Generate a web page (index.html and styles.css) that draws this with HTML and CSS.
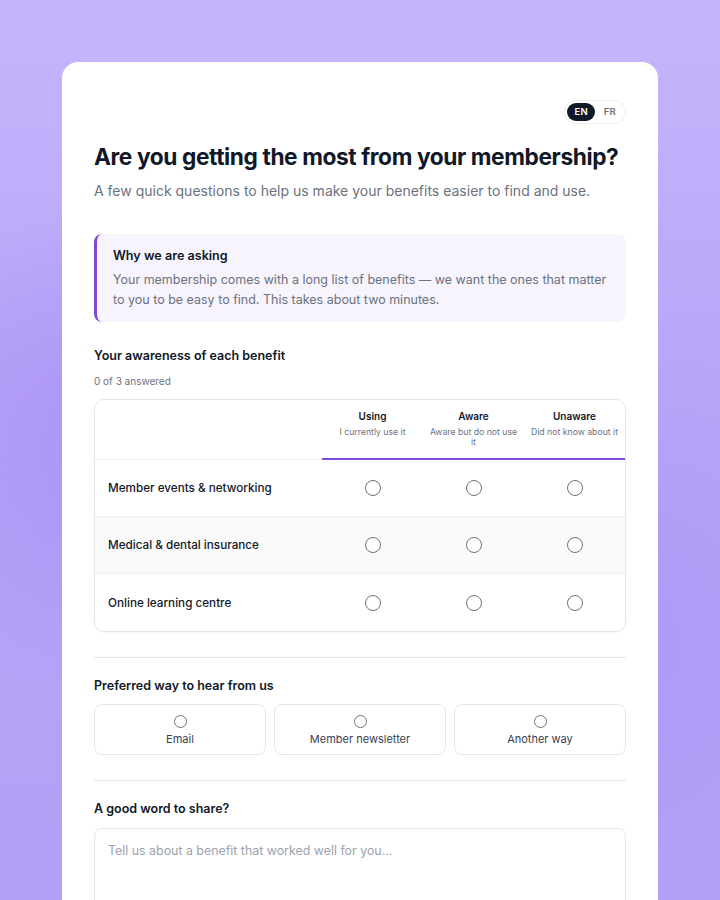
FILE: index.html
```html
<!DOCTYPE html>
<html lang="en">
<head>
<meta charset="utf-8">
<title>Membership survey</title>
<link rel="stylesheet" href="styles.css">
</head>
<body>
<div class="page">
  <main class="card">
    <div class="lang-row">
      <div class="lang">
        <span class="lang-opt active">EN</span>
        <span class="lang-opt">FR</span>
      </div>
    </div>
    <h1 class="title">Are you getting the most from your membership?</h1>
    <p class="subtitle">A few quick questions to help us make your benefits easier to find and use.</p>

    <div class="info">
      <div class="info-title">Why we are asking</div>
      <p class="info-text">Your membership comes with a long list of benefits — we want the ones that matter to you to be easy to find. This takes about two minutes.</p>
    </div>

    <section class="section">
      <h2 class="q-title">Your awareness of each benefit</h2>
      <div class="q-meta">0 of 3 answered</div>
      <div class="matrix">
        <div class="m-head">
          <div class="m-corner"></div>
          <div class="m-col"><div class="m-col-title">Using</div><div class="m-col-sub">I currently use it</div></div>
          <div class="m-col"><div class="m-col-title">Aware</div><div class="m-col-sub">Aware but do not use it</div></div>
          <div class="m-col"><div class="m-col-title">Unaware</div><div class="m-col-sub">Did not know about it</div></div>
        </div>
        <div class="m-row">
          <div class="m-label">Member events &amp; networking</div>
          <div class="m-cell"><span class="radio"></span></div>
          <div class="m-cell"><span class="radio"></span></div>
          <div class="m-cell"><span class="radio"></span></div>
        </div>
        <div class="m-row alt">
          <div class="m-label">Medical &amp; dental insurance</div>
          <div class="m-cell"><span class="radio"></span></div>
          <div class="m-cell"><span class="radio"></span></div>
          <div class="m-cell"><span class="radio"></span></div>
        </div>
        <div class="m-row last">
          <div class="m-label">Online learning centre</div>
          <div class="m-cell"><span class="radio"></span></div>
          <div class="m-cell"><span class="radio"></span></div>
          <div class="m-cell"><span class="radio"></span></div>
        </div>
      </div>
    </section>

    <hr class="divider">

    <section class="section">
      <h2 class="q-title">Preferred way to hear from us</h2>
      <div class="options">
        <div class="option"><span class="radio small"></span><span class="opt-label">Email</span></div>
        <div class="option"><span class="radio small"></span><span class="opt-label">Member newsletter</span></div>
        <div class="option"><span class="radio small"></span><span class="opt-label">Another way</span></div>
      </div>
    </section>

    <hr class="divider">

    <section class="section">
      <h2 class="q-title">A good word to share?</h2>
      <div class="textarea">Tell us about a benefit that worked well for you...</div>
    </section>
  </main>
</div>
</body>
</html>
```

FILE: styles.css
```css
* { box-sizing: border-box; }
html, body {
  margin: 0;
  padding: 0;
  height: 100%;
}
body {
  font-family: Inter, "Noto Sans", "Liberation Sans", sans-serif;
  color: #111827;
  overflow: hidden;
  background:
    radial-gradient(ellipse 60% 40% at 20% 50%, rgba(168, 144, 245, 0.9), rgba(168, 144, 245, 0) 70%),
    radial-gradient(ellipse 60% 45% at 85% 70%, rgba(172, 150, 246, 0.8), rgba(172, 150, 246, 0) 70%),
    linear-gradient(180deg, #c5b6fc 0%, #b9a6f8 40%, #b3a0f6 100%);
}
.page {
  padding: 62px 62px 0 62px;
}
.card {
  background: #ffffff;
  border-radius: 16px 16px 0 0;
  padding: 38px 32px 40px 32px;
  min-height: 900px;
}
.lang-row {
  display: flex;
  justify-content: flex-end;
}
.lang {
  display: flex;
  gap: 2px;
  padding: 2px;
  border: 1px solid #eceef2;
  border-radius: 999px;
  background: #fff;
}
.lang-opt {
  font-size: 9.5px;
  font-weight: 600;
  color: #6b7280;
  padding: 4px 7px;
  border-radius: 999px;
  line-height: 10px;
  letter-spacing: 0.2px;
}
.lang-opt.active {
  background: #111827;
  color: #fff;
}
.title {
  margin: 18px 0 0 0;
  font-size: 22.7px;
  line-height: 30px;
  font-weight: 700;
  letter-spacing: -0.4px;
  color: #111827;
}
.subtitle {
  margin: 9px 0 0 0;
  font-size: 14px;
  line-height: 20px;
  color: #6b7280;
}
.info {
  margin-top: 33px;
  background: #f7f4fd;
  border-left: 3px solid #7c4ad8;
  border-radius: 8px;
  padding: 13px 16px 12px 16px;
}
.info-title {
  font-size: 12.6px;
  font-weight: 600;
  line-height: 18px;
  color: #111827;
}
.info-text {
  margin: 5px 0 0 0;
  font-size: 12.5px;
  line-height: 20px;
  color: #6b7280;
}
.section {
  margin-top: 24px;
}
.q-title {
  margin: 0;
  font-size: 12.5px;
  line-height: 20px;
  font-weight: 600;
  color: #111827;
}
.q-meta {
  margin-top: 8px;
  font-size: 10px;
  line-height: 14px;
  color: #6b7280;
}
.matrix {
  margin-top: 11px;
  border: 1px solid #e5e7eb;
  border-radius: 10px;
  overflow: hidden;
  box-shadow: 0 1px 2px rgba(17, 24, 39, 0.04);
}
.m-head, .m-row {
  display: grid;
  grid-template-columns: 227px 1fr 1fr 1fr;
}
.m-head {
  height: 60px;
}
.m-corner {
  border-bottom: 1px solid #f0f1f4;
}
.m-col {
  border-bottom: 2px solid #7c4ad8;
  text-align: center;
  padding: 9px 6px 0 6px;
}
.m-col-title {
  font-size: 10px;
  font-weight: 600;
  line-height: 14px;
  color: #111827;
}
.m-col-sub {
  margin-top: 4px;
  font-size: 8.7px;
  line-height: 10px;
  color: #6b7280;
}
.m-row {
  height: 57px;
  align-items: center;
  border-bottom: 1px solid #f0f1f4;
}
.m-row.alt {
  background: #fafafa;
}
.m-row.last {
  border-bottom: none;
}
.m-label {
  padding-left: 13px;
  font-size: 11.7px;
  font-weight: 500;
  color: #111827;
}
.m-cell {
  display: flex;
  justify-content: center;
}
.radio {
  display: inline-block;
  width: 16px;
  height: 16px;
  border: 1px solid #71717a;
  border-radius: 50%;
  background: #fff;
}
.radio.small {
  width: 13px;
  height: 13px;
}
.divider {
  margin: 25px 0 0 0;
  border: none;
  border-top: 1px solid #e3e0ef;
}
.divider + .section {
  margin-top: 18px;
}
.options {
  margin-top: 8px;
  display: grid;
  grid-template-columns: 1fr 1fr 1fr;
  gap: 8px;
}
.option {
  height: 51px;
  border: 1px solid #e5e7eb;
  border-radius: 8px;
  display: flex;
  flex-direction: column;
  align-items: center;
  justify-content: center;
  gap: 4px;
  padding-top: 2px;
}
.opt-label {
  font-size: 11px;
  line-height: 14px;
  color: #374151;
}
.textarea {
  margin-top: 9px;
  height: 120px;
  border: 1px solid #e5e7eb;
  border-radius: 8px;
  padding: 13px 13px;
  font-size: 12.4px;
  line-height: 18px;
  color: #9ca3af;
}
```
